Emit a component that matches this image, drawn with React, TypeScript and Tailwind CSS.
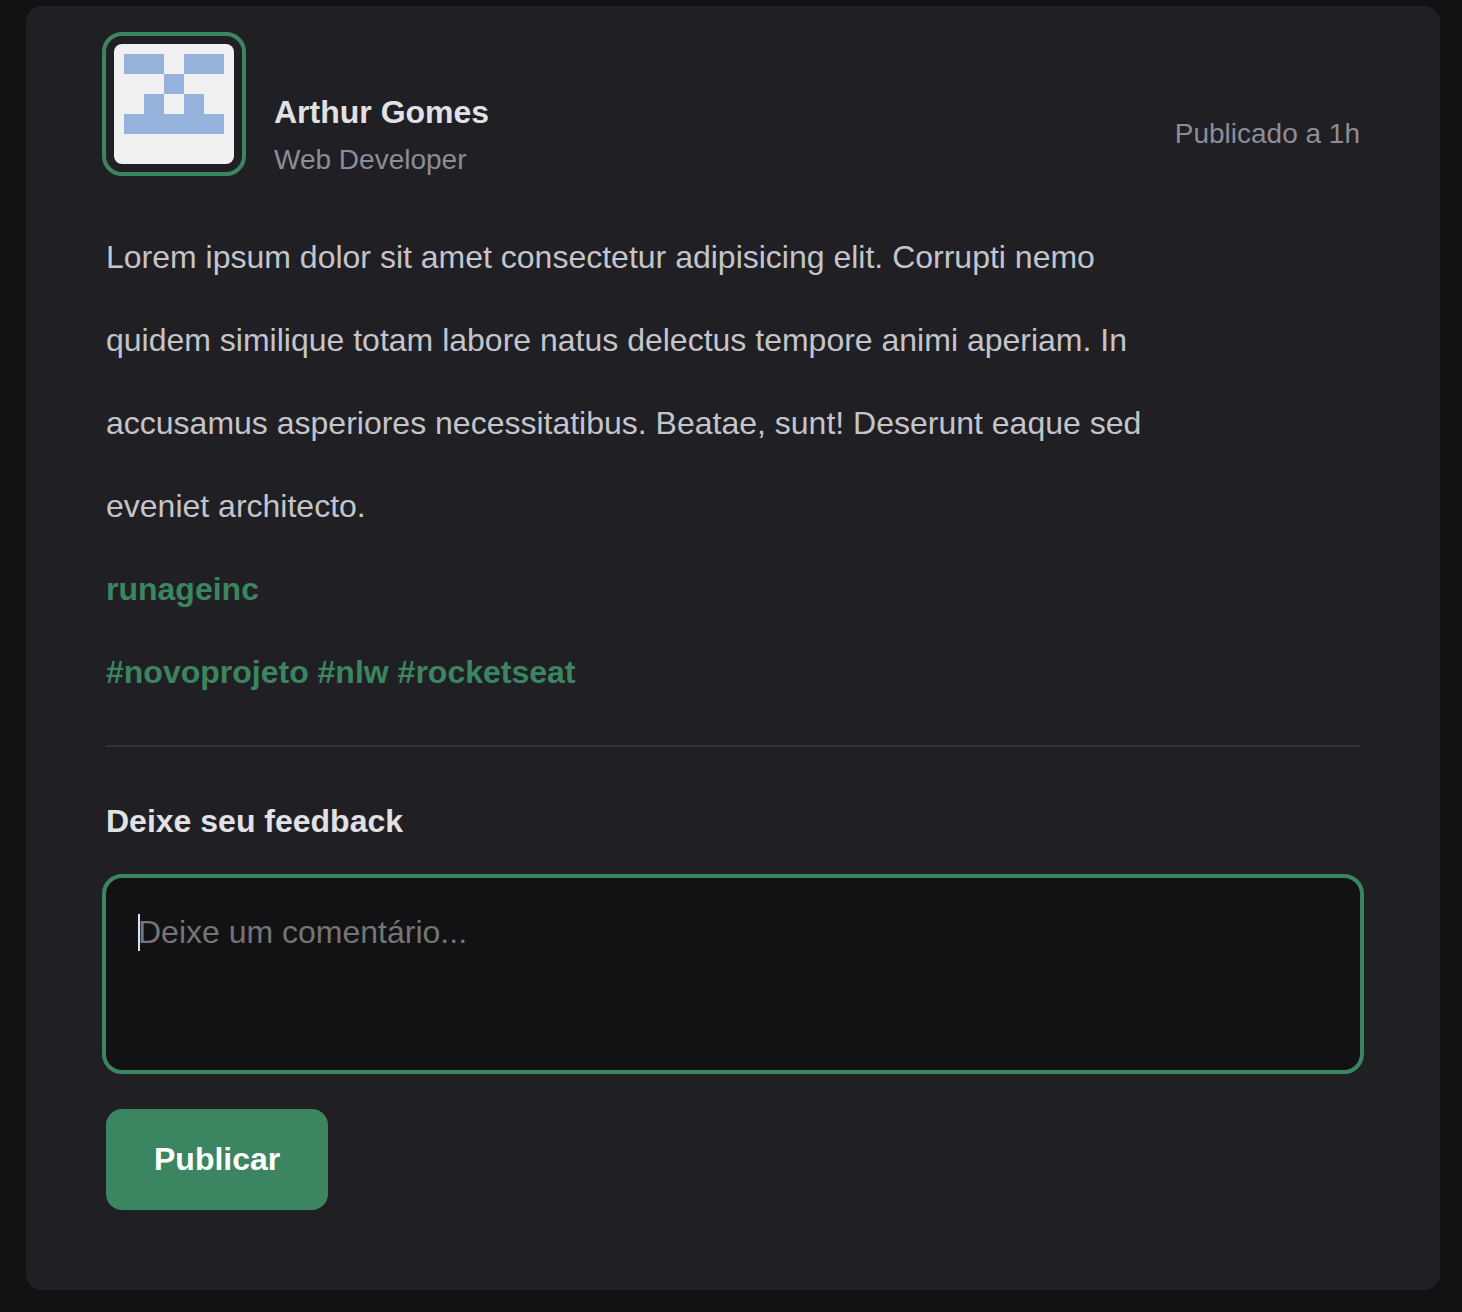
import React from "react";

function Avatar() {
  return (
    <svg viewBox="0 0 120 120" role="img" aria-label="Arthur Gomes" shapeRendering="crispEdges" className="size-full rounded-lg bg-[#f0f0f0]">
      <path
        fill="#96b3de"
        d="M10 10h40v20H10zM70 10h40v20H70zM50 30h20v20H50zM30 50h20v20H30zM70 50h20v20H70zM10 70h100v20H10z"
      />
    </svg>
  );
}

const linkClass = "font-bold text-[#3c8561] hover:text-[#00b37e]";

export default function App() {
  return (
    <main className="min-h-screen bg-[#121214] pt-1.5 pr-[22px] pb-[22px] pl-[26px] font-['Liberation_Sans',Arial,sans-serif] text-[32px]">
      <article className="rounded-2xl bg-[#202024] p-20 pt-[26px]">
        <header className="flex items-center justify-between">
          <div className="flex items-center gap-7">
            <div className="-ml-1 size-36 rounded-[20px] border-4 border-[#3c8561] p-2">
              <Avatar />
            </div>
            <div className="pt-15">
              <strong className="block leading-10 text-[#e1e1e6]">Arthur Gomes</strong>
              <span className="mt-3 block text-[28px] leading-8 text-[#8d8d99]">Web Developer</span>
            </div>
          </div>
          <time className="pt-15 text-[28px] leading-8 text-[#8d8d99]">Publicado a 1h</time>
        </header>

        <div className="mt-10 leading-[83px] text-[#c4c4cc]">
          <p className="max-w-[1060px]">
            Lorem ipsum dolor sit amet consectetur adipisicing elit. Corrupti nemo quidem similique totam labore natus
            delectus tempore animi aperiam. In accusamus asperiores necessitatibus. Beatae, sunt! Deserunt eaque sed
            eveniet architecto.
          </p>
          <p>
            <a href="#runageinc" className={linkClass}>runageinc</a>
          </p>
          <p>
            <a href="#novoprojeto" className={linkClass}>#novoprojeto</a>{" "}
            <a href="#nlw" className={linkClass}>#nlw</a>{" "}
            <a href="#rocketseat" className={linkClass}>#rocketseat</a>
          </p>
        </div>

        <form className="mt-[31px] border-t-2 border-[#323238] pt-12">
          <label htmlFor="comment" className="block font-bold leading-[52px] text-[#e1e1e6]">
            Deixe seu feedback
          </label>
          <div className="relative -mx-1 mt-[27px]">
            <textarea
              id="comment"
              autoFocus
              placeholder="Deixe um comentário..."
              className="peer block h-[200px] w-full resize-none rounded-[20px] border-4 border-[#3c8561] bg-[#121214] p-8 leading-[45px] text-[#e1e1e6] caret-[#e1e1e6] outline-none placeholder:text-[#757575] placeholder-shown:caret-transparent"
            />
            <span
              aria-hidden="true"
              className="pointer-events-none absolute top-10 left-9 hidden h-[37px] w-0.5 bg-[#e1e1e6] peer-placeholder-shown:block"
            />
          </div>
          <button type="button" className="mt-[35px] rounded-2xl bg-[#3c8561] px-12 py-8 font-bold leading-[37px] text-white">
            Publicar
          </button>
        </form>
      </article>
    </main>
  );
}
